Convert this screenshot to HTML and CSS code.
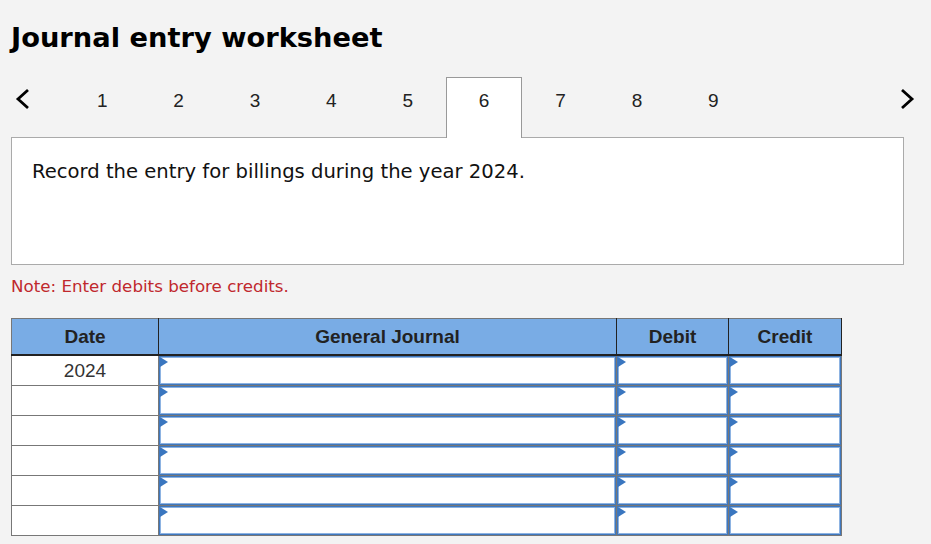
FILE: index.html
```html
<!DOCTYPE html>
<html lang="en">
<head>
<meta charset="utf-8">
<title>Journal entry worksheet</title>
<link rel="stylesheet" href="styles.css">
</head>
<body>
<main class="page">
  <h1 class="title">Journal entry worksheet</h1>

  <nav class="stepper">
    <button class="nav prev" aria-label="Previous">
      <svg width="16" height="22" viewBox="0 0 16 22"><polyline points="13,2 3,11 13,20" fill="none" stroke="#000" stroke-width="2.8" stroke-linecap="butt" stroke-linejoin="miter"/></svg>
    </button>
    <div class="tabs">
      <div class="tab">1</div>
      <div class="tab">2</div>
      <div class="tab">3</div>
      <div class="tab">4</div>
      <div class="tab">5</div>
      <div class="tab active">6</div>
      <div class="tab">7</div>
      <div class="tab">8</div>
      <div class="tab">9</div>
    </div>
    <button class="nav next" aria-label="Next">
      <svg width="16" height="22" viewBox="0 0 16 22"><polyline points="3,2 13,11 3,20" fill="none" stroke="#000" stroke-width="2.8" stroke-linecap="butt" stroke-linejoin="miter"/></svg>
    </button>
  </nav>

  <section class="prompt">
    <p>Record the entry for billings during the year 2024.</p>
  </section>

  <p class="note">Note: Enter debits before credits.</p>

  <table class="journal">
    <colgroup>
      <col class="c-date">
      <col class="c-gj">
      <col class="c-amt">
      <col class="c-amt2">
    </colgroup>
    <thead>
      <tr><th>Date</th><th>General Journal</th><th>Debit</th><th>Credit</th></tr>
    </thead>
    <tbody>
      <tr><td class="date">2024</td><td><div class="field"></div></td><td><div class="field"></div></td><td><div class="field"></div></td></tr>
      <tr><td class="date"></td><td><div class="field"></div></td><td><div class="field"></div></td><td><div class="field"></div></td></tr>
      <tr><td class="date"></td><td><div class="field"></div></td><td><div class="field"></div></td><td><div class="field"></div></td></tr>
      <tr><td class="date"></td><td><div class="field"></div></td><td><div class="field"></div></td><td><div class="field"></div></td></tr>
      <tr><td class="date"></td><td><div class="field"></div></td><td><div class="field"></div></td><td><div class="field"></div></td></tr>
      <tr><td class="date"></td><td><div class="field"></div></td><td><div class="field"></div></td><td><div class="field"></div></td></tr>
    </tbody>
  </table>
</main>
</body>
</html>
```

FILE: styles.css
```css
html, body {
  margin: 0;
  padding: 0;
  background: #f3f3f3;
}

.page {
  width: 931px;
  font-family: "DejaVu Sans", sans-serif;
  color: #111;
}

.title {
  margin: 0;
  padding: 21px 0 0 11px;
  font-family: "DejaVu Sans", sans-serif;
  font-weight: bold;
  font-size: 27.3px;
  line-height: 34px;
  color: #000;
}

.stepper {
  display: flex;
  align-items: flex-start;
  margin-top: 22px;
  height: 60px;
}

.nav {
  background: none;
  border: 0;
  padding: 0;
  margin: 0;
  cursor: pointer;
  height: 22px;
  margin-top: 11px;
}

.nav svg { display: block; }

.prev {
  width: 64px;
  padding-left: 15px;
  text-align: left;
}

.next {
  margin-left: auto;
  margin-right: 16px;
  width: 16px;
}

.tabs {
  display: flex;
}

.tab {
  width: 76.4px;
  height: 60px;
  box-sizing: border-box;
  text-align: center;
  font-family: "Liberation Sans", Arial, sans-serif;
  font-size: 19px;
  line-height: 22px;
  padding-top: 12px;
  color: #222;
  border: 1px solid transparent;
  border-bottom: 0;
}

.tab.active {
  background: #fff;
  border-color: #999;
  height: 61px;
  position: relative;
  z-index: 1;
}

.prompt {
  margin: 0 27px 0 11px;
  height: 128px;
  box-sizing: border-box;
  background: #fff;
  border: 1px solid #aaa;
  padding: 22px 20px 0 20px;
}

.prompt p {
  margin: 0;
  font-size: 19.6px;
  line-height: 24px;
  color: #111;
}

.note {
  margin: 11px 0 0 11px;
  font-size: 16.7px;
  line-height: 20px;
  color: #c0282d;
}

.journal {
  margin: 22px 0 0 11px;
  width: 830px;
  border-collapse: collapse;
  table-layout: fixed;
  font-family: "Liberation Sans", Arial, sans-serif;
  font-size: 19px;
  border: 1px solid #777;
}

.c-date { width: 147px; }
.c-gj { width: 458px; }
.c-amt { width: 112px; }
.c-amt2 { width: 113px; }

.journal th {
  background: #79ace5;
  color: #222;
  font-weight: bold;
  height: 35px;
  padding: 0;
  border-top: 1px solid #777;
  border-right: 1px solid #222;
  border-bottom: 2px solid #222;
  text-align: center;
}

.journal th:first-child {
  border-left: 1px solid #777;
}

.journal td {
  padding: 0;
  border: 1px solid #777;
  background: #fff;
  vertical-align: top;
}

.journal td.date {
  text-align: center;
  vertical-align: middle;
  color: #333;
  line-height: 22px;
}

.field {
  position: relative;
  height: 29px;
  box-sizing: border-box;
  border: 1px solid #3f77bd;
  box-shadow: inset 0 0 0 1px #8db3e2;
  background: #fff;
}

.field::before {
  content: "";
  position: absolute;
  left: 0;
  top: 0;
  width: 0;
  height: 0;
  border-left: 8px solid #3a76bf;
  border-top: 5px solid transparent;
  border-bottom: 5px solid transparent;
}
```
